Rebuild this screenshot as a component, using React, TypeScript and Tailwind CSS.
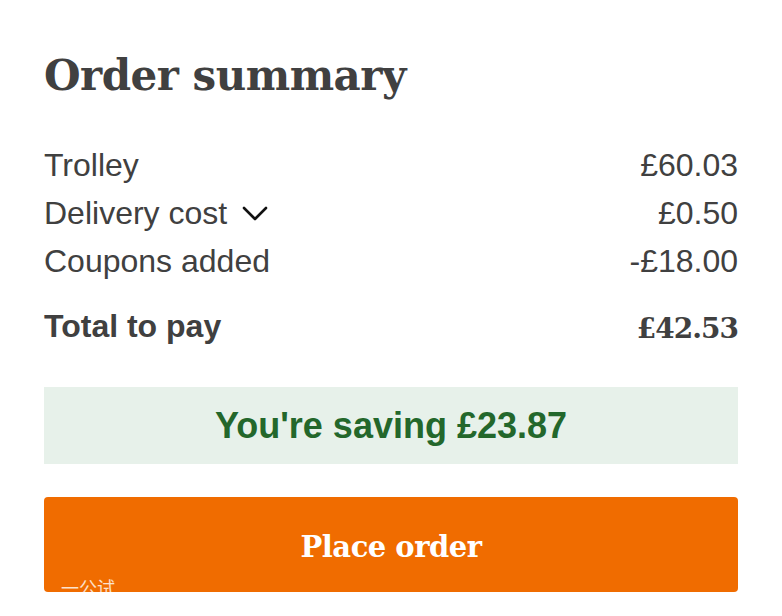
import React from 'react'

const slab = { fontFamily: '"DejaVu Serif", "Liberation Serif", serif' }
const sans = { fontFamily: '"Liberation Sans", Arial, sans-serif' }

const rows = [
  { label: 'Trolley', value: '£60.03' },
  { label: 'Delivery cost', value: '£0.50', toggle: true },
  { label: 'Coupons added', value: '-£18.00' },
]

const Chevron = () => (
  <svg width="28" height="28" viewBox="0 0 28 28" fill="none" stroke="#111" strokeWidth="2.6" strokeLinecap="round" strokeLinejoin="round" className="ml-[14px]">
    <path d="M3 9l11 11 11-11" />
  </svg>
)

export default function App() {
  return (
    <div className="w-[782px] h-[616px] bg-white overflow-hidden px-[44px] pt-[50px]" style={sans}>
      <h1 className="text-[42px] leading-[52px] font-bold text-[#404040] tracking-[-0.5px]" style={slab}>
        Order summary
      </h1>

      <div className="mt-[39px] text-[#404040]">
        {rows.map(row => (
          <div key={row.label} className="flex items-center justify-between h-[48px] text-[32px]">
            <div className="flex items-center">
              <span>{row.label}</span>
              {row.toggle && <Chevron />}
            </div>
            <span>{row.value}</span>
          </div>
        ))}
        <div className="flex items-center justify-between mt-[13px] h-[56px]">
          <span className="text-[32px] font-bold">Total to pay</span>
          <span className="text-[28px] font-bold tracking-[-1px] mt-[6px]" style={slab}>£42.53</span>
        </div>
      </div>

      <div className="mt-[33px] h-[77px] bg-[#e7f1ea] flex items-center justify-center">
        <span className="text-[36px] font-bold text-[#23672b]">You're saving £23.87</span>
      </div>

      <button className="relative mt-[33px] w-full h-[95px] pt-[6px] rounded-[4px] bg-[#f06c00] flex items-center justify-center">
        <span className="text-[29px] font-bold text-white tracking-[-0.5px]" style={slab}>Place order</span>
        <span className="absolute left-[17px] bottom-[-9px] text-[18px] text-white/80" style={{ fontFamily: '"Noto Sans CJK SC", sans-serif' }}>
          一公试
        </span>
      </button>
    </div>
  )
}
